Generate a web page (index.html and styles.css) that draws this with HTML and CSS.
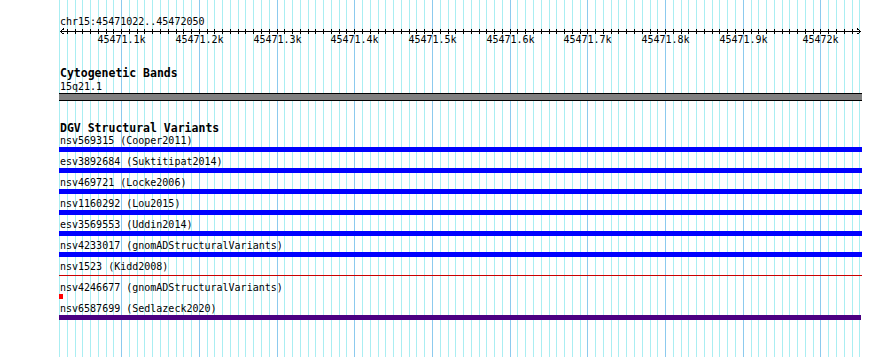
FILE: index.html
```html
<!DOCTYPE html>
<html lang="en">
<head>
  <meta charset="UTF-8" />
  <title>chr15:45471022..45472050</title>
  <link rel="stylesheet" href="styles.css">
</head>
<body>
  <div class="browser">
    <div class="grid" id="grid"></div>

    <div class="tracks">
      <div class="ruler-track">
        <div class="locus">chr15:45471022..45472050</div>
        <svg class="ruler" id="ruler" width="803" height="6"></svg>
        <div class="ruler-labels" id="rulerLabels"></div>
      </div>

      <div class="track cyto-track">
        <div class="track-label">Cytogenetic Bands</div>
        <div class="feature-label band-label">15q21.1</div>
        <div class="cytoband"></div>
      </div>

      <div class="track dgv-track">
        <div class="track-label">DGV Structural Variants</div>

        <div class="feature">
          <div class="feature-label">nsv569315 (Cooper2011)</div>
          <div class="bar bar-blue"></div>
        </div>
        <div class="feature">
          <div class="feature-label">esv3892684 (Suktitipat2014)</div>
          <div class="bar bar-blue"></div>
        </div>
        <div class="feature">
          <div class="feature-label">nsv469721 (Locke2006)</div>
          <div class="bar bar-blue"></div>
        </div>
        <div class="feature">
          <div class="feature-label">nsv1160292 (Lou2015)</div>
          <div class="bar bar-blue"></div>
        </div>
        <div class="feature">
          <div class="feature-label">esv3569553 (Uddin2014)</div>
          <div class="bar bar-blue"></div>
        </div>
        <div class="feature">
          <div class="feature-label">nsv4233017 (gnomADStructuralVariants)</div>
          <div class="bar bar-blue"></div>
        </div>
        <div class="feature">
          <div class="feature-label">nsv1523 (Kidd2008)</div>
          <div class="bar bar-line"></div>
        </div>
        <div class="feature">
          <div class="feature-label">nsv4246677 (gnomADStructuralVariants)</div>
          <div class="bar bar-point"></div>
        </div>
        <div class="feature">
          <div class="feature-label">nsv6587699 (Sedlazeck2020)</div>
          <div class="bar bar-purple"></div>
        </div>
      </div>
    </div>
  </div>

  <script>
    // escala medida: 45471020 fica em x=59, 0.777 px por base
    const inicio = 45471020;
    const pxPorBase = 0.777;
    const grid = document.getElementById('grid');
    const ruler = document.getElementById('ruler');
    const rulerLabels = document.getElementById('rulerLabels');
    const svgNS = 'http://www.w3.org/2000/svg';

    function linha(x1, y1, x2, y2) {
      const l = document.createElementNS(svgNS, 'line');
      l.setAttribute('x1', x1);
      l.setAttribute('y1', y1);
      l.setAttribute('x2', x2);
      l.setAttribute('y2', y2);
      ruler.appendChild(l);
    }

    // linha principal e setas
    linha(1, 3.5, 802, 3.5);
    const setas = document.createElementNS(svgNS, 'path');
    setas.setAttribute('d', 'M5,0.5 L1.5,3.5 L5,6.5 M798,0.5 L801.5,3.5 L798,6.5');
    ruler.appendChild(setas);

    for (let k = 0; k <= 103; k++) {
      const bp = inicio + k * 10;
      const x = Math.round(k * 10 * pxPorBase);
      const major = bp % 100 === 0;

      const g = document.createElement('div');
      g.className = major ? 'gridline major' : 'gridline';
      g.style.left = (59 + x) + 'px';
      grid.appendChild(g);

      if (k > 0 && k < 103) linha(x + 0.5, 1, x + 0.5, 6);

      if (major) {
        const lab = document.createElement('div');
        lab.className = 'tick-label';
        lab.style.left = (x + 0.5) + 'px';
        const kb = bp / 1000;
        lab.textContent = (Number.isInteger(kb) ? kb : kb.toFixed(1)) + 'k';
        rulerLabels.appendChild(lab);
      }
    }
  </script>
</body>
</html>
```

FILE: styles.css
```css
* {
  box-sizing: border-box;
  margin: 0;
  padding: 0;
}

body {
  font-family: 'DejaVu Sans Mono', monospace;
  font-size: 10px;
  color: #000;
  background: #fff;
}

.browser {
  position: relative;
  width: 890px;
  height: 357px;
  overflow: hidden;
}

.grid {
  position: absolute;
  inset: 0;
}

.gridline {
  position: absolute;
  top: 0;
  bottom: 0;
  width: 1px;
  background: #aaeef2;
}

.gridline.major {
  background: #8ccaee;
}

.tracks {
  position: relative;
  margin-left: 59px;
  width: 803px;
  padding-top: 15px;
}

.locus {
  line-height: 13px;
  padding-left: 1px;
}

.ruler {
  display: block;
  stroke: #000;
  stroke-width: 1;
  fill: none;
  shape-rendering: crispEdges;
}

.ruler-labels {
  position: relative;
  height: 12px;
}

.tick-label {
  position: absolute;
  top: 0;
  line-height: 12px;
  transform: translateX(-50%);
  white-space: nowrap;
}

.track {
  margin-top: 21px;
}

.track-label {
  font-size: 11.5px;
  font-weight: bold;
  line-height: 12px;
  padding-left: 1px;
}

.feature-label {
  line-height: 13px;
  padding-left: 1px;
  white-space: nowrap;
}

.band-label {
  padding-top: 1px;
}

.cytoband {
  height: 8px;
  background: #808080;
  border-top: 1px solid #000;
  border-bottom: 1px solid #000;
}

.feature {
  margin-bottom: 3px;
}

.bar {
  height: 5px;
}

.bar-blue {
  background: #0000ff;
}

.bar-purple {
  background: #4b0082;
  width: 802px;
}

.bar-line {
  border-top: 2px solid transparent;
}

.bar-line::before {
  content: '';
  display: block;
  height: 1px;
  background: #cc0000;
}

.bar-point {
  width: 4px;
  background: #ff0000;
}
```
